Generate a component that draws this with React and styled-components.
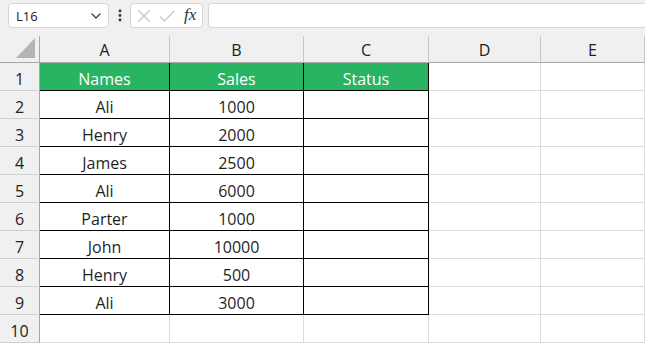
import React from 'react';
import styled, { createGlobalStyle } from 'styled-components';

const GlobalStyle = createGlobalStyle`
  html, body {
    margin: 0;
    padding: 0;
    background: #ffffff;
    overflow: hidden;
  }
  body {
    font-family: "Open Sans", "Liberation Sans", sans-serif;
  }
`;

const Page = styled.div`
  width: 645px;
  height: 343px;
  background: #f0f0f0;
  overflow: hidden;
`;

const Toolbar = styled.div`
  height: 36px;
  display: flex;
  align-items: flex-start;
  padding: 3px 0 0 8px;
  box-sizing: border-box;
`;

const NameBox = styled.div`
  width: 101px;
  height: 25px;
  box-sizing: border-box;
  background: #fff;
  border: 1px solid #d6d6d6;
  border-radius: 4px;
  display: flex;
  align-items: center;
  justify-content: space-between;
  padding: 0 6px 0 7px;
  font-size: 13px;
  color: #222;
`;

const Dots = styled.div`
  width: 21px;
  height: 25px;
  display: flex;
  align-items: center;
  justify-content: center;
`;

const FxBox = styled.div`
  width: 73px;
  height: 25px;
  box-sizing: border-box;
  background: #fff;
  border: 1px solid #d6d6d6;
  border-radius: 4px;
  display: flex;
  align-items: center;
  padding: 0 5px 0 6px;
  gap: 8px;
`;

const FxLabel = styled.span`
  font-family: "Liberation Serif", serif;
  font-style: italic;
  font-size: 17px;
  color: #333;
  margin-left: 1px;
  margin-top: -2px;
`;

const FormulaBar = styled.div`
  flex: 1;
  height: 25px;
  margin-left: 5px;
  box-sizing: border-box;
  background: #fff;
  border: 1px solid #d6d6d6;
  border-right: none;
  border-radius: 4px 0 0 4px;
`;

const Sheet = styled.div`
  display: grid;
  grid-template-columns: 40px 130px 134px 125px 112px 104px;
  grid-template-rows: 27px repeat(10, 28px);
  background: #fff;
`;

const Corner = styled.div`
  position: relative;
  background: #f0f0f0;
  border-right: 1px solid #a8a8a8;
  border-bottom: 1px solid #a8a8a8;
  box-sizing: border-box;
`;

const CornerTriangle = styled.div`
  position: absolute;
  right: 4px;
  bottom: 4px;
  width: 0;
  height: 0;
  border-left: 19px solid transparent;
  border-bottom: 20px solid #b4b4b4;
`;

const ColHead = styled.div`
  background: #f0f0f0;
  border-right: 1px solid #c6c6c6;
  border-bottom: 1px solid #a8a8a8;
  box-sizing: border-box;
  display: flex;
  align-items: center;
  justify-content: center;
  font-size: 16px;
  color: #222;
  padding-top: 1px;
`;

const RowHead = styled.div`
  background: #f0f0f0;
  border-right: 1px solid #a8a8a8;
  border-bottom: 1px solid #cfcfcf;
  box-sizing: border-box;
  display: flex;
  align-items: center;
  justify-content: center;
  font-size: 16px;
  color: #222;
  padding-top: 4px;
`;

const Cell = styled.div`
  box-sizing: border-box;
  display: flex;
  align-items: center;
  justify-content: center;
  font-size: 16px;
  padding-top: 4px;
  color: ${p => (p.$header ? '#ffffff' : '#1f1f1f')};
  background: ${p => (p.$header ? '#28b463' : '#ffffff')};
  border-right: 1px solid ${p => (p.$table ? '#000' : '#dadada')};
  border-bottom: 1px solid ${p => (p.$table ? '#000' : '#dadada')};
`;

const columns = ['A', 'B', 'C', 'D', 'E'];

const data = [
  ['Names', 'Sales', 'Status'],
  ['Ali', '1000', ''],
  ['Henry', '2000', ''],
  ['James', '2500', ''],
  ['Ali', '6000', ''],
  ['Parter', '1000', ''],
  ['John', '10000', ''],
  ['Henry', '500', ''],
  ['Ali', '3000', ''],
];

function Chevron() {
  return (
    <svg width="12" height="8" viewBox="0 0 12 8">
      <path d="M1.5 1.5 L6 6 L10.5 1.5" fill="none" stroke="#444" strokeWidth="1.3" />
    </svg>
  );
}

export default function App() {
  const rows = [];
  for (let r = 0; r < 10; r++) {
    rows.push(<RowHead key={`h${r}`}>{r + 1}</RowHead>);
    for (let c = 0; c < 5; c++) {
      const inTable = r < 9 && c < 3;
      const value = inTable ? data[r][c] : '';
      rows.push(
        <Cell key={`${r}-${c}`} $table={inTable} $header={r === 0 && c < 3}>
          {value}
        </Cell>
      );
    }
  }

  return (
    <Page>
      <GlobalStyle />
      <Toolbar>
        <NameBox>
          <span>L16</span>
          <Chevron />
        </NameBox>
        <Dots>
          <svg width="4" height="13" viewBox="0 0 4 13">
            <circle cx="2" cy="2" r="1.4" fill="#333" />
            <circle cx="2" cy="6.5" r="1.4" fill="#333" />
            <circle cx="2" cy="11" r="1.4" fill="#333" />
          </svg>
        </Dots>
        <FxBox>
          <svg width="14" height="14" viewBox="0 0 14 14">
            <path d="M1.5 1.5 L12.5 12.5 M12.5 1.5 L1.5 12.5" stroke="#c4c4c4" strokeWidth="1.2" />
          </svg>
          <svg width="16" height="14" viewBox="0 0 16 14">
            <path d="M1 7.5 L5.5 12 L15 2" fill="none" stroke="#c4c4c4" strokeWidth="1.2" />
          </svg>
          <FxLabel>fx</FxLabel>
        </FxBox>
        <FormulaBar />
      </Toolbar>
      <Sheet>
        <Corner>
          <CornerTriangle />
        </Corner>
        {columns.map(c => (
          <ColHead key={c}>{c}</ColHead>
        ))}
        {rows}
      </Sheet>
    </Page>
  );
}
